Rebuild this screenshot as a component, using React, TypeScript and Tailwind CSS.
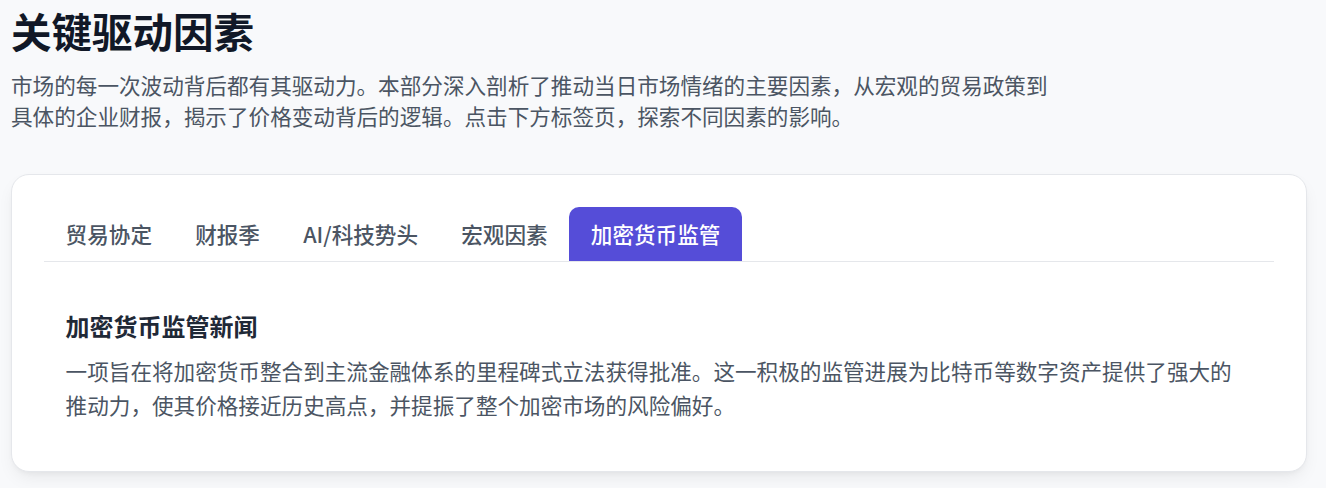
import React, { useState } from "react";

const tabs = ["贸易协定", "财报季", "AI/科技势头", "宏观因素", "加密货币监管"];

export default function App() {
  const [active, setActive] = useState(4);
  return (
    <div
      className="min-h-[488px] w-full bg-[#f8f9fb] pl-[11px] pt-[7px]"
      style={{ fontFamily: '"Noto Sans CJK SC", "Noto Sans", sans-serif' }}
    >
      <h1 className="text-[40.5px] leading-[48px] font-bold text-[#111827]">关键驱动因素</h1>
      <p className="mt-[14px] w-[1046px] text-[21.6px] leading-[31px] text-[#4b5563]">
        市场的每一次波动背后都有其驱动力。本部分深入剖析了推动当日市场情绪的主要因素，从宏观的贸易政策到具体的企业财报，揭示了价格变动背后的逻辑。点击下方标签页，探索不同因素的影响。
      </p>
      <div className="mt-[43px] w-[1296px] rounded-[18px] border border-[#e5e7eb] bg-white p-[32px] shadow-[0_8px_18px_-4px_rgba(0,0,0,0.08),0_3px_6px_-3px_rgba(0,0,0,0.06)]">
        <div className="flex border-b border-[#e5e7eb]">
          {tabs.map((t, i) => (
            <button
              key={t}
              onClick={() => setActive(i)}
              className={
                "flex h-[54px] items-center px-[21.6px] text-[21.6px] font-medium rounded-t-[10px] " +
                (i === active ? "bg-[#554dd8] text-white" : "text-[#4b5563]")
              }
            >
              {t}
            </button>
          ))}
        </div>
        <div className="px-[21.6px] pt-[48px] pb-[18px]">
          <h3 className="text-[24px] leading-[32px] font-bold text-[#1f2937]">加密货币监管新闻</h3>
          <p className="mt-[12px] text-[21.6px] leading-[33.6px] text-[#4b5563]">
            一项旨在将加密货币整合到主流金融体系的里程碑式立法获得批准。这一积极的监管进展为比特币等数字资产提供了强大的推动力，使其价格接近历史高点，并提振了整个加密市场的风险偏好。
          </p>
        </div>
      </div>
    </div>
  );
}
